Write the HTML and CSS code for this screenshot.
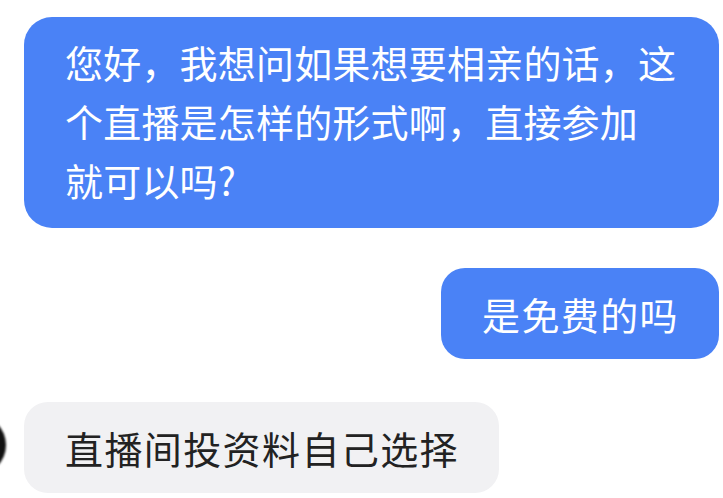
FILE: index.html
```html
<!DOCTYPE html>
<html lang="zh">
<head>
    <meta charset="utf-8"/>
    <meta content="width=device-width, initial-scale=1" name="viewport"/>
    <title>聊天记录</title>
    <link rel="stylesheet" href="styles.css">
</head>
<body>
    <div class="chat">
        <div class="row row-right">
            <div class="bubble bubble-me bubble-long">
                您好，我想问如果想要相亲的话，这<br>个直播是怎样的形式啊，直接参加<br>就可以吗?
            </div>
        </div>
        <div class="row row-right">
            <div class="bubble bubble-me">
                是免费的吗
            </div>
        </div>
        <div class="row row-left">
            <div class="avatar"></div>
            <div class="bubble bubble-other">
                直播间投资料自己选择
            </div>
        </div>
    </div>
</body>
</html>
```

FILE: styles.css
```css
* {
    box-sizing: border-box;
}
body, html {
    margin: 0;
    padding: 0;
    background: #ffffff;
    font-family: "Noto Sans CJK SC", "Noto Sans", sans-serif;
    height: 100%;
    overflow: hidden;
}
.chat {
    display: flex;
    flex-direction: column;
    padding: 17px 4px 0 24px;
}
.row {
    display: flex;
    align-items: center;
}
.row-right {
    justify-content: flex-end;
}
.row + .row {
    margin-top: 40px;
}
.row-left {
    margin-top: 43px !important;
    position: relative;
}
.bubble {
    font-size: 38px;
    line-height: 59px;
    letter-spacing: 1.4px;
    padding: 16px 40px 16px 41px;
    border-radius: 24px;
}
.bubble-me {
    background-color: #4a82f6;
    color: #ffffff;
}
.bubble-long {
    width: 100%;
    white-space: nowrap;
    letter-spacing: 0.2px;
    padding: 15px 40px 19px 41px;
    border-radius: 28px;
}
.bubble-other {
    background-color: #f1f1f3;
    color: #222222;
}
/* avatar mostly outside the window on the left */
.avatar {
    position: absolute;
    left: -78px;
    top: 13px;
    width: 60px;
    height: 60px;
    border-radius: 50%;
    background: #111111;
    filter: blur(1px);
}
```
